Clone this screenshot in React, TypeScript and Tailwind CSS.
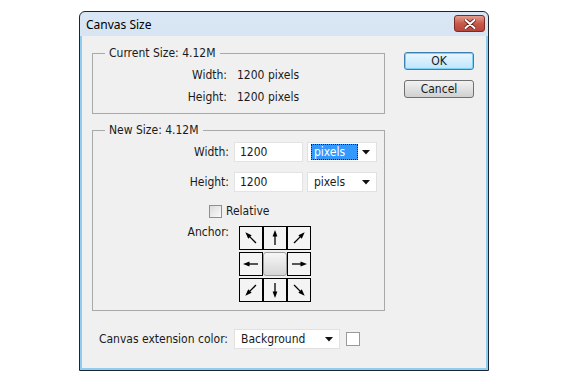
import React from 'react';

const Arrow = ({ angle }: { angle: number }) => (
  <svg width="22" height="22" viewBox="0 0 22 22" style={{ transform: `rotate(${angle}deg)` }}>
    <line x1="11" y1="18" x2="11" y2="8" stroke="#000" strokeWidth="1.3" />
    <polygon points="11,3 8.6,9.5 13.4,9.5" fill="#000" />
  </svg>
);

const Caret = () => (
  <svg width="8" height="5" viewBox="0 0 8 5">
    <polygon points="0,0 8,0 4,4.5" fill="#111" />
  </svg>
);

const Select = ({ value, active, width }: { value: string; active?: boolean; width: string }) => (
  <div className={`${width} h-[20px] bg-white border border-[#e1e1e1] flex items-center justify-between pl-[3px] pr-[6px]`}>
    {active ? (
      <span className="h-[16px] w-[47px] bg-[#3399ff] text-white border border-dotted border-[#222] flex items-center pl-[2px] leading-none">
        {value}
      </span>
    ) : (
      <span className="pl-[3px] leading-none">{value}</span>
    )}
    <Caret />
  </div>
);

export default function App() {
  const anchors = [-45, 0, 45, -90, null, 90, -135, 180, 135];

  return (
    <div className="min-h-screen bg-white pl-[79px] pt-[11px] font-['DejaVu_Sans_Condensed','DejaVu_Sans',sans-serif] text-[12px] text-[#1a1a1a]">
      <div className="w-[410px] h-[360px] flex flex-col rounded-t-[6px] border border-[#1d2630] bg-gradient-to-b from-[#d9e6f4] to-[#c1d5ec]">
        <div className="h-[24px] shrink-0 flex items-start justify-between pl-[6px] pr-[3px]">
          <span className="mt-[4px] font-['Noto_Sans',sans-serif] text-[12px] text-black">Canvas Size</span>
          <button className="mt-[3px] w-[31px] h-[17px] rounded-[3px] border border-[#7a2b22] bg-gradient-to-b from-[#e29e8f] via-[#c9594a] to-[#b8443a] flex items-center justify-center">
            <svg width="12" height="10" viewBox="0 0 12 10">
              <path d="M1.5 1 L10.5 9 M10.5 1 L1.5 9" stroke="#5a1a14" strokeWidth="3.6" strokeLinecap="round" />
              <path d="M1.5 1 L10.5 9 M10.5 1 L1.5 9" stroke="#fff" strokeWidth="2" strokeLinecap="round" />
            </svg>
          </button>
        </div>

        <div className="flex-1 flex flex-col border-x-2 border-b-2 border-[#8fcdf0] bg-[#f0f0f0] pl-[10px] pt-[10px]">
          <div className="flex">
            <div className="w-[293px] flex flex-col gap-[9px]">
              <fieldset className="border border-[#a9a9a9] px-0 pb-[5px]">
                <legend className="ml-[12px] px-[4px] leading-[15px]">Current Size: 4.12M</legend>
                <div className="grid grid-cols-[134px_auto] gap-x-[10px] pt-[3px]">
                  <span className="text-right leading-[22px]">Width:</span>
                  <span className="leading-[22px]">1200 pixels</span>
                  <span className="text-right leading-[22px]">Height:</span>
                  <span className="leading-[22px]">1200 pixels</span>
                </div>
              </fieldset>

              <fieldset className="border border-[#a9a9a9] pb-[8px]">
                <legend className="ml-[12px] px-[4px] leading-[15px]">New Size: 4.12M</legend>
                <div className="flex flex-col gap-[10px] pt-[4px]">
                  <div className="flex items-center">
                    <span className="w-[136px] text-right">Width:</span>
                    <div className="ml-[5px] w-[69px] h-[20px] bg-white border border-[#e3e3e3] flex items-center pl-[5px]">1200</div>
                    <div className="ml-[4px]"><Select value="pixels" active width="w-[70px]" /></div>
                  </div>
                  <div className="flex items-center">
                    <span className="w-[136px] text-right">Height:</span>
                    <div className="ml-[5px] w-[69px] h-[20px] bg-white border border-[#e3e3e3] flex items-center pl-[5px]">1200</div>
                    <div className="ml-[4px]"><Select value="pixels" width="w-[70px]" /></div>
                  </div>
                </div>
                <div className="flex items-center pl-[116px] mt-[10px]">
                  <span className="w-[13px] h-[13px] border border-[#8f8f8f] bg-gradient-to-br from-[#dcdcdc] to-[#fafafa]" />
                  <span className="ml-[4px]">Relative</span>
                </div>
                <div className="flex items-start mt-[6px]">
                  <span className="w-[136px] text-right mt-[-3px]">Anchor:</span>
                  <div className="ml-[10px] grid grid-cols-[24px_24px_24px] gap-y-[2px]">
                    {anchors.map((a, i) =>
                      a === null ? (
                        <div key={i} className="w-[24px] h-[24px] rounded-[3px] border border-[#9c9c9c] bg-gradient-to-b from-[#f7f7f7] to-[#d6d6d6]" />
                      ) : (
                        <div key={i} className="w-[24px] h-[24px] border border-black bg-[#f4f4f4] flex items-center justify-center">
                          <Arrow angle={a} />
                        </div>
                      )
                    )}
                  </div>
                </div>
              </fieldset>
            </div>

            <div className="ml-[19px] mt-[6px] flex flex-col gap-[10px]">
              <button className="w-[70px] h-[18px] rounded-[3px] border border-[#3c7fb1] bg-gradient-to-b from-[#eaf6fd] to-[#bee6fd] shadow-[inset_0_0_0_1px_#7fd0f5] leading-none">OK</button>
              <button className="w-[70px] h-[18px] rounded-[3px] border border-[#707070] bg-gradient-to-b from-[#f2f2f2] to-[#d0d0d0] leading-none">Cancel</button>
            </div>
          </div>

          <div className="flex items-center mt-[18px]">
            <span className="w-[136px] text-right">Canvas extension color:</span>
            <div className="ml-[6px]"><Select value="Background" width="w-[106px]" /></div>
            <span className="ml-[6px] w-[14px] h-[14px] bg-white border border-[#9a9a9a]" />
          </div>
        </div>
      </div>
    </div>
  );
}
